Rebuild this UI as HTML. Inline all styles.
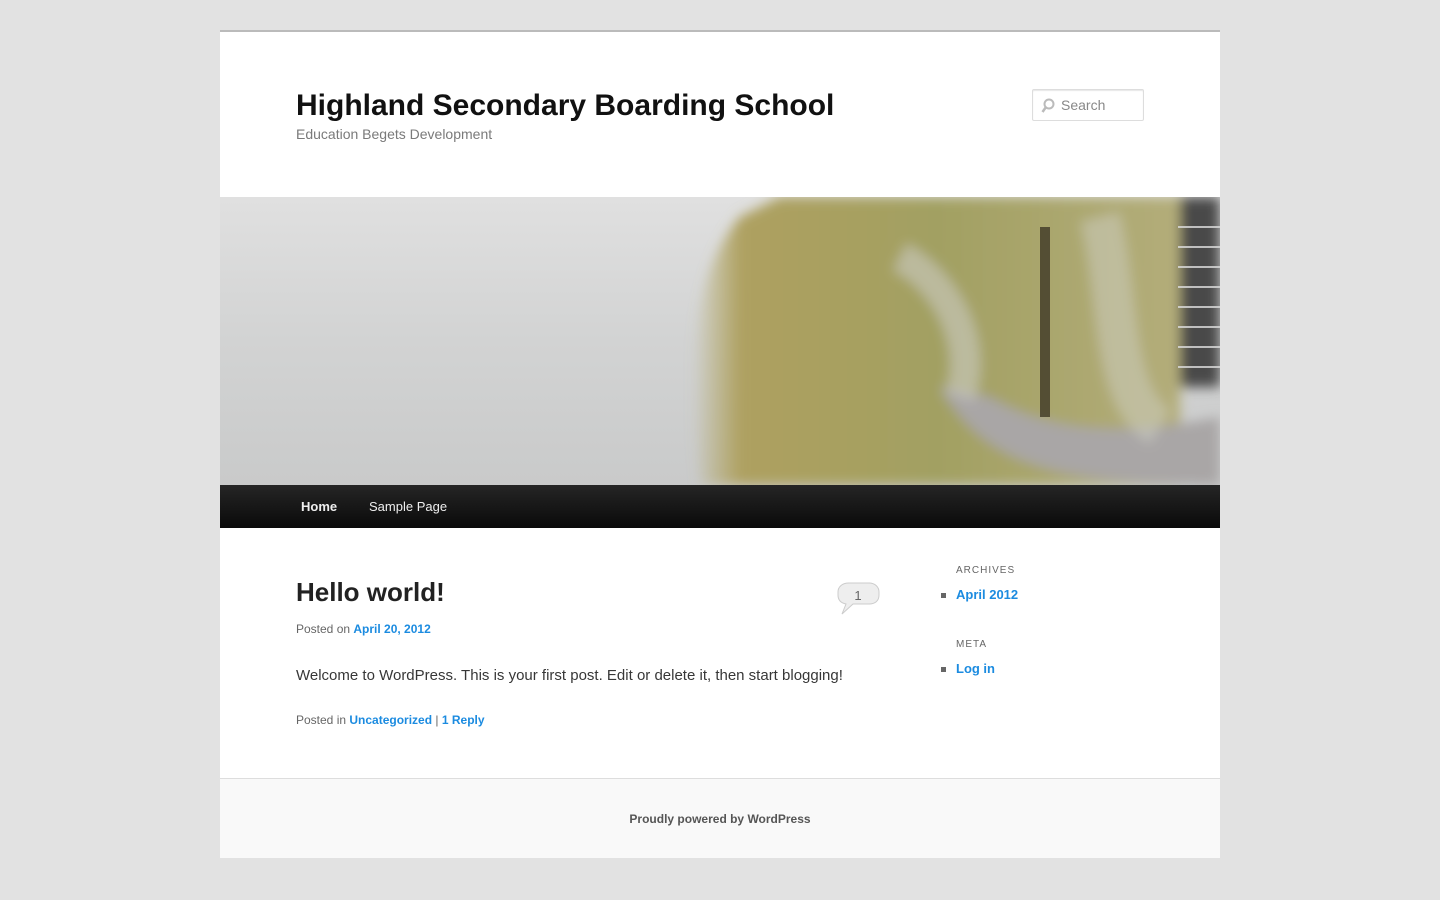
<!DOCTYPE html>
<html><head><meta charset="utf-8"><style>
*{margin:0;padding:0;box-sizing:border-box}
body{background:#e2e2e2;font-family:"Liberation Sans",sans-serif;width:1440px;height:900px;overflow:hidden}
#page{position:absolute;left:220px;top:30px;width:1000px;height:828px;background:#fff;border-top:2px solid #bbb}
a{color:#1b8be0;text-decoration:none;font-weight:bold}
.title{position:absolute;left:76px;top:57px;font-size:30px;font-weight:bold;color:#111}
.desc{position:absolute;left:76px;top:94px;font-size:14px;color:#7a7a7a}
.search{position:absolute;left:812px;top:57px;width:112px;height:32px;border:1px solid #ddd;border-radius:2px;font-size:14px;color:#888;padding:7px 0 0 28px;box-shadow:inset 0 1px 1px rgba(0,0,0,.1)}
.img{position:absolute;left:0;top:165px;width:1000px;height:288px;overflow:hidden;
background:linear-gradient(180deg,#e0e0e0,#d2d3d3 50%,#c9caca)}
.nav{position:absolute;left:0;top:453px;width:1000px;height:43px;background:linear-gradient(#252525,#0a0a0a);font-size:13px;color:#eee}
.nav span{position:absolute;top:14px}
.post-title{position:absolute;left:76px;top:545px;font-size:26px;font-weight:bold;color:#222}
.meta{position:absolute;font-size:12px;color:#666}
.body{position:absolute;left:76px;top:635px;font-size:15px;color:#373737}
.wt{position:absolute;left:736px;font-size:10px;letter-spacing:1px;color:#666}
.wl{position:absolute;left:736px;font-size:13px}
.wl:before{content:"";position:absolute;left:-15px;top:6px;width:5px;height:5px;background:#666}
footer{position:absolute;left:0;top:746px;width:1000px;height:80px;background:#f9f9f9;border-top:1px solid #ddd;text-align:center;font-size:12px;font-weight:bold;color:#555;padding-top:33px}
</style></head><body>
<div id="page">
<div class="title">Highland Secondary Boarding School</div>
<div class="desc">Education Begets Development</div>
<div class="search"><svg style="position:absolute;left:8px;top:8px" width="14" height="16" viewBox="0 0 14 16"><circle cx="8" cy="6" r="4.5" fill="none" stroke="#bbb" stroke-width="2"/><path d="M5 9L1.5 14" stroke="#bbb" stroke-width="2.5"/></svg>Search</div>
<div class="img">
<svg width="1000" height="288" viewBox="0 0 1000 288">
<defs>
<linearGradient id="t" x1="0" x2="1"><stop offset="0" stop-color="#b0a560" stop-opacity="0"/><stop offset=".1" stop-color="#aea060"/><stop offset=".5" stop-color="#a2a062"/><stop offset="1" stop-color="#b3ad7a"/></linearGradient>
<filter id="b"><feGaussianBlur stdDeviation="6"/></filter>
</defs>
<g filter="url(#b)">
<path d="M480 288C465 180 470 80 520 20L560 0H960V288Z" fill="url(#t)"/>
<path d="M720 190C760 260 820 288 1000 288V220C900 240 830 235 770 200Z" fill="#a9a6a6"/>
<path d="M680 60C720 80 760 140 740 200" stroke="#ccccc4" stroke-width="30" fill="none" opacity=".6"/>
<path d="M880 20C900 100 890 200 940 230" stroke="#d0cfc5" stroke-width="40" fill="none" opacity=".5"/>
<rect x="960" y="0" width="40" height="190" fill="#4a4a48"/>
</g>
<rect x="820" y="30" width="10" height="190" fill="#3f3826" opacity=".8"/>
<g stroke="#ddd" stroke-width="2" opacity=".8">
<line x1="958" y1="30" x2="1000" y2="30"/><line x1="958" y1="50" x2="1000" y2="50"/><line x1="958" y1="70" x2="1000" y2="70"/><line x1="958" y1="90" x2="1000" y2="90"/><line x1="958" y1="110" x2="1000" y2="110"/><line x1="958" y1="130" x2="1000" y2="130"/><line x1="958" y1="150" x2="1000" y2="150"/><line x1="958" y1="170" x2="1000" y2="170"/></g>
</svg></div>
<div class="nav"><span style="left:81px;font-weight:bold">Home</span><span style="left:149px">Sample Page</span></div>
<div class="post-title">Hello world!</div>
<svg style="position:absolute;left:617px;top:550px" width="44" height="36" viewBox="0 0 44 36"><path d="M12 1H32C38 1 42 5 42 10V13C42 19 38 22 32 22H16L5 32L9 22C4 21 1 18 1 13V10C1 5 5 1 12 1Z" fill="#eee" stroke="#ccc"/><text x="21" y="18" font-size="13" text-anchor="middle" fill="#666" font-family="Liberation Sans">1</text></svg>
<div class="meta" style="left:76px;top:590px">Posted on <a>April 20, 2012</a></div>
<div class="body">Welcome to WordPress. This is your first post. Edit or delete it, then start blogging!</div>
<div class="meta" style="left:76px;top:681px">Posted in <a>Uncategorized</a> | <a>1 Reply</a></div>
<div class="wt" style="top:533px">ARCHIVES</div>
<div class="wl" style="top:555px"><a>April 2012</a></div>
<div class="wt" style="top:607px">META</div>
<div class="wl" style="top:629px"><a>Log in</a></div>
<footer>Proudly powered by WordPress</footer>
</div>
</body></html>
